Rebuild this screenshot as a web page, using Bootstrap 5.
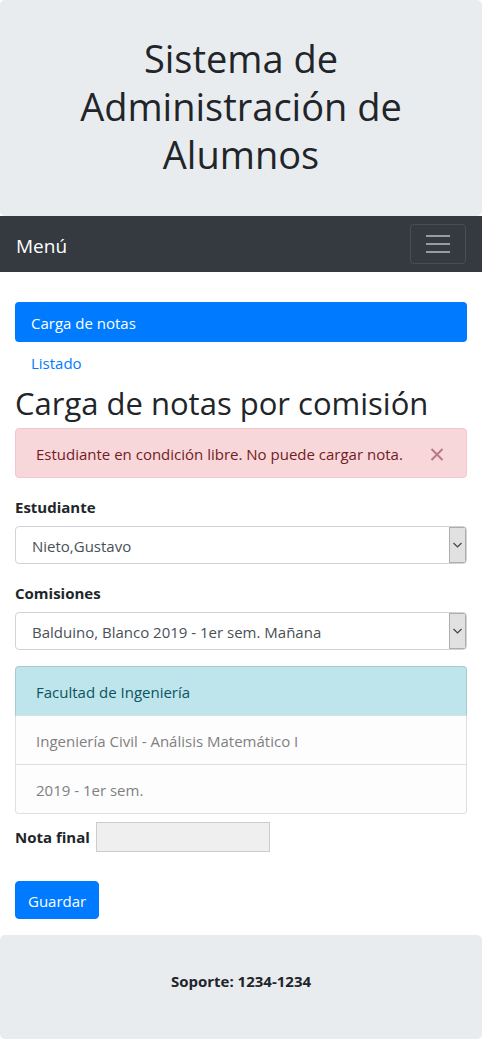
<!DOCTYPE html>
<html lang="es">
<head>
<meta charset="utf-8">
<meta name="viewport" content="width=device-width, initial-scale=1">
<title>Sistema de Administración de Alumnos</title>
<link href="https://cdn.jsdelivr.net/npm/bootstrap@5.3.0/dist/css/bootstrap.min.css" rel="stylesheet">
<style>
  body { font-family: "Open Sans", "Noto Sans", sans-serif; font-size: 15px; font-weight: 400; line-height: 24px; color: #212529; background: #fff; }
  .banner { background: #e9ecef; border-radius: 5px; padding: 34px 15px 30px; }
  h1 { font-size: 38px; line-height: 48px; font-weight: 400; }
  h2 { font-size: 31px; line-height: 34px; padding-top: 4px; font-weight: 400; }
  .site-nav { background: #343a40; }
  .site-nav .navbar-brand { font-size: 19px; line-height: 30px; padding: 7px 0 3px; font-weight: 400; }
  .site-nav .navbar-toggler { padding: 4px 12px; font-size: 20px; border-color: rgba(255,255,255,.1); border-radius: 4px; }
  .toggle-lines { display: block; width: 30px; height: 30px; }
  .page { padding: 30px 15px 16px; }
  .nav-pills { --bs-nav-pills-border-radius: 4px; --bs-nav-pills-link-active-bg: #007bff; --bs-nav-link-color: #007bff; }
  .nav-pills .nav-link { padding: 9px 16px 7px; }
  .notice { background: #f8d7da; border: 1px solid #f5c6cb; color: #721c24; border-radius: 4px; padding: 13px 20px 11px; margin-bottom: 16px; }
  .notice-close { border: 0; background: none; padding: 0; margin-right: 2px; color: #b97980; line-height: 0; }
  .field-name { font-weight: 700; }
  .form-label { padding-top: 1px; margin-bottom: 7px; }
  .picker { border: 1px solid #ced4da; border-radius: 4px; padding: 7px 28px 5px 16px; height: 38px; font-size: 15px; line-height: 24px; color: #495057;
    background: #fff url("data:image/svg+xml,%3Csvg xmlns='http://www.w3.org/2000/svg' width='17' height='36'%3E%3Crect x='.5' y='.5' width='16' height='35' fill='%23e1e1e1' stroke='%23adadad'/%3E%3Cpath d='M4.500 16l4 4 4-4' fill='none' stroke='%23444' stroke-width='1.200'/%3E%3C/svg%3E") right 0 center / 17px 36px no-repeat; }
  .details { --bs-list-group-border-radius: 4px; --bs-list-group-border-color: #dfdfdf; --bs-list-group-bg: #fdfdfd; --bs-list-group-color: #808080; margin-bottom: 8px; }
  .details .list-group-item { padding: 13px 20px 11px; }
  .details .current { background: #bee5eb; border-color: #a5ccd2; color: #0c5460; }
  .details .current { border-bottom: 1px solid #dfdfdf; }
  .details .current + .list-group-item { border-top: 0; }
  .grade-row { gap: 6px; }
  .grade { width: 174px; height: 30px; border: 1px solid #ccc; background: #efefef; padding: 1px 2px; }
  .btn-save { --bs-btn-bg: #007bff; --bs-btn-border-color: #007bff; --bs-btn-border-radius: 4px; font-size: 15px; line-height: 24px; padding: 7px 12px 5px; margin-top: 29px; }
</style>
</head>
<body>
<header class="banner text-center">
  <h1 class="mb-2">Sistema de Administración de Alumnos</h1>
</header>
<nav class="navbar navbar-dark site-nav px-3 py-2">
  <a class="navbar-brand" href="#">Menú</a>
  <button class="navbar-toggler" type="button" aria-label="Abrir menú">
    <svg class="toggle-lines" viewBox="0 0 30 30" stroke="#999c9f" stroke-width="2" aria-hidden="true"><path d="M3 7h24M3 15h24M3 23h24"/></svg>
  </button>
</nav>
<main class="page">
  <ul class="nav nav-pills flex-column">
    <li class="nav-item"><a class="nav-link active" href="#">Carga de notas</a></li>
    <li class="nav-item"><a class="nav-link" href="#">Listado</a></li>
  </ul>
  <h2 class="mb-2">Carga de notas por comisión</h2>
  <div class="notice d-flex justify-content-between align-items-center" role="alert">
    <span>Estudiante en condición libre. No puede cargar nota.</span>
    <button type="button" class="notice-close" aria-label="Cerrar">
      <svg width="14" height="14" viewBox="0 0 14 14" fill="none" stroke="currentColor" stroke-width="2" aria-hidden="true"><path d="M1.500 2l11 11M12.500 2l-11 11"/></svg>
    </button>
  </div>
  <form>
    <div class="mb-3">
      <label class="form-label field-name d-block" for="estudiante">Estudiante</label>
      <select class="form-select picker" id="estudiante"><option>Nieto,Gustavo</option></select>
    </div>
    <div class="mb-3">
      <label class="form-label field-name d-block" for="comisiones">Comisiones</label>
      <select class="form-select picker" id="comisiones"><option>Balduino, Blanco 2019 - 1er sem. Mañana</option></select>
    </div>
    <ul class="list-group details">
      <li class="list-group-item current">Facultad de Ingeniería</li>
      <li class="list-group-item">Ingeniería Civil - Análisis Matemático I</li>
      <li class="list-group-item">2019 - 1er sem.</li>
    </ul>
    <div class="d-flex align-items-center grade-row">
      <label class="field-name" for="nota">Nota final</label>
      <input class="grade" type="text" id="nota" disabled>
    </div>
    <button type="submit" class="btn btn-primary btn-save">Guardar</button>
  </form>
</main>
<footer class="banner text-center">
  <p class="field-name mb-3">Soporte: 1234-1234</p>
</footer>
<script src="https://cdn.jsdelivr.net/npm/bootstrap@5.3.0/dist/js/bootstrap.bundle.min.js"></script>
</body>
</html>
